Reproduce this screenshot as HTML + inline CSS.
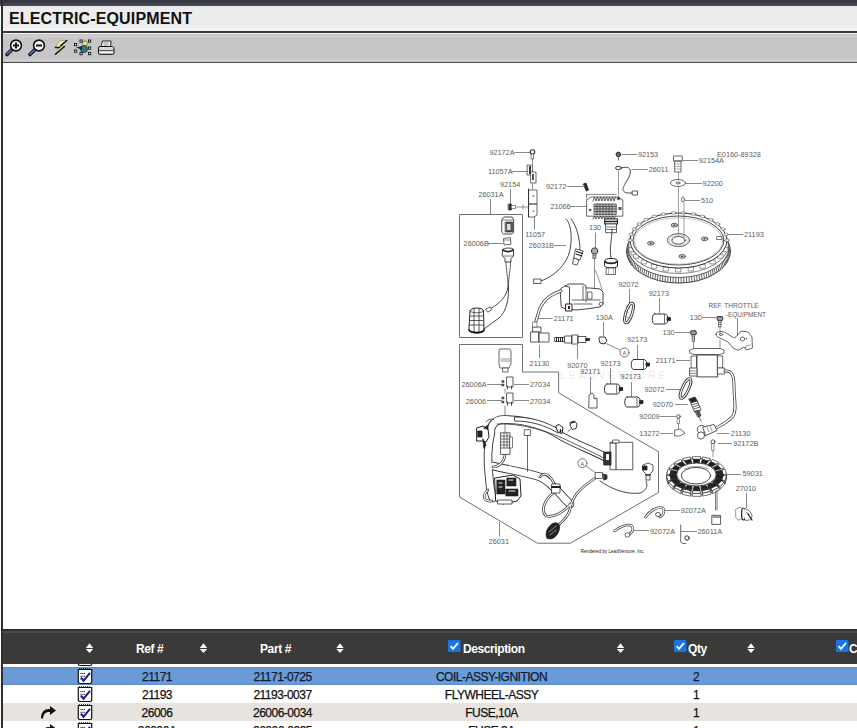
<!DOCTYPE html>
<html><head><meta charset="utf-8">
<style>
html,body{margin:0;padding:0;width:857px;height:728px;overflow:hidden;background:#fff;font-family:"Liberation Sans",sans-serif;}
.a{position:absolute;}
#topbar{left:0;top:0;width:857px;height:6px;background:linear-gradient(#30333d,#4a4d58);}
#lborder{left:1px;top:0;width:2px;height:728px;background:#2e2e2e;}
#hdr{left:3px;top:6px;width:854px;height:25px;background:#ececec;}
#hline{left:3px;top:31px;width:854px;height:2px;background:#3a3a3a;}
#tb{left:3px;top:33px;width:854px;height:29px;background:#c7c5c7;}
#tline{left:3px;top:62px;width:854px;height:1px;background:#4a4a4a;}
#title{left:9px;top:10px;font-size:16px;font-weight:bold;color:#111;letter-spacing:0.15px;}
#thead{left:3px;top:629px;width:854px;height:35px;background:#3a3a38;}
#theadtop{left:3px;top:629px;width:854px;height:3px;background:#4a4b4d;}
.th{color:#fff;font-weight:bold;font-size:12px;top:642px;letter-spacing:-0.4px;}
.sort{width:9px;height:11px;top:642px;}
.row{left:3px;width:854px;height:18px;}
.td{font-size:12px;color:#111;letter-spacing:-0.5px;-webkit-text-stroke:0.25px currentColor;}
.cb{width:12px;height:12px;background:#1e6ff0;border-radius:1px;top:640px;}
</style></head><body>
<div class="a" id="topbar"></div>
<div class="a" id="hdr"></div>
<div class="a" id="title">ELECTRIC-EQUIPMENT</div>
<div class="a" id="hline"></div>
<div class="a" id="tb"></div>
<div class="a" id="tline"></div>
<div class="a" style="left:3px;top:33px;width:854px;height:1px;background:#f2f2f2"></div>
<div class="a" style="left:3px;top:35px;width:854px;height:3px;background:#cdcbcd"></div>
<div class="a" style="left:3px;top:59px;width:854px;height:2px;background:#cfcecf"></div>
<div class="a" style="left:3px;top:26px;width:854px;height:1px;background:#f3f3f3"></div>
<div class="a" style="left:3px;top:28px;width:854px;height:3px;background:#f5f5f5"></div>
<div class="a" style="left:3px;top:6px;width:854px;height:2px;background:#e8e9ed"></div>
<svg class="a" style="left:0;top:33px" width="130" height="29" viewBox="0 33 130 29">
<g id="zin">
<path d="M7 54.5 L12 49.5" stroke="#0d1a33" stroke-width="3.6" stroke-linecap="round"/>
<path d="M7.3 54 L11.5 49.8" stroke="#5b82b8" stroke-width="1.3" stroke-linecap="round"/>
<circle cx="16" cy="45.5" r="5.4" fill="#f4f4f4" stroke="#111" stroke-width="1.6"/>
</g>
<path d="M13 45.5h6 M16 42.5v6" stroke="#111" stroke-width="2"/>
<use href="#zin" x="23"/>
<path d="M36 45.5h6" stroke="#111" stroke-width="2"/>
<path d="M60 40.5 L66.8 40.5 L60.8 46.5 L64.4 46.5 L55.5 54.3 L59.5 47.5 L55.5 47.5 Z" fill="#f6f2a6" stroke="#8a8a70" stroke-width="0.6" stroke-linejoin="round"/>
<path d="M66.8 40.5 L60.4 45.8 M55.5 47.5 L59.7 47.5 M64.4 46.5 L55.5 54.3" stroke="#111" stroke-width="1.5" stroke-linecap="round"/>
<circle cx="85" cy="43.5" r="2.6" fill="#e8e070" stroke="#555" stroke-width="0.6"/>
<circle cx="84" cy="49" r="3.6" fill="#2c7a78" stroke="#123" stroke-width="0.6"/>
<path d="M76 47.5 L82 46 L82 50 Z" fill="#1a2a55"/>
<g fill="#fff" stroke="#111" stroke-width="0.9">
<rect x="80" y="40" width="2.2" height="2.2"/><rect x="88.5" y="40" width="2.2" height="2.2"/>
<rect x="74.5" y="43.5" width="2.2" height="2.2"/><rect x="88.5" y="47" width="2.2" height="2.2"/>
<rect x="74.5" y="50" width="2.2" height="2.2"/><rect x="80" y="52.5" width="2.2" height="2.2"/><rect x="88.5" y="52.5" width="2.2" height="2.2"/>
</g>
<path d="M101 47 L102.5 41 L111 41 L110.5 47 Z" fill="#fff" stroke="#111" stroke-width="0.9"/>
<path d="M103.5 43h5 M103.3 45h5" stroke="#333" stroke-width="0.6"/>
<path d="M98.5 48 Q98.5 46.5 100 46.5 L112.5 46.5 Q114 47 114 49 L114 53 Q114 54.3 112.5 54.3 L100 54.3 Q98.5 54.3 98.5 53 Z" fill="#d8d8d8" stroke="#111" stroke-width="1"/>
<path d="M99 50.5h14.5" stroke="#333" stroke-width="0.8"/>
<path d="M99.5 52.5h13.5" stroke="#fff" stroke-width="0.8"/>
</svg>


<!--DIAGRAM--><svg class="a" style="left:0;top:0" width="857" height="728" viewBox="0 0 857 728">
<text x="560" y="378.5" font-family="Liberation Sans, sans-serif" font-size="10px" fill="#ececec" textLength="105" lengthAdjust="spacing">LEADVENTURE</text>
<g fill="none" stroke="#6a6a6a" stroke-width="0.8">
<path d="M514.5 152.5L531 152.5"/>
<path d="M511.5 171.5L528 171.5"/>
<path d="M510.5 189L510.5 206"/>
<path d="M490.5 199L490.5 214.5"/>
<path d="M488 243.5L503 243.5"/>
<path d="M534.5 215L534.5 229.5"/>
<path d="M554 245.5L566 245.5"/>
<path d="M622 154.5L637 154.5"/>
<path d="M631.5 169.5L648 169.5"/>
<path d="M566.5 186.5L583 186.5"/>
<path d="M570 206.5L586.5 206.5"/>
<path d="M595.5 232.5L595.5 250"/>
<path d="M535 318.5L552.5 318.5"/>
<path d="M603.5 322L603.5 336"/>
<path d="M629.5 289L629.5 304"/>
<path d="M659.5 298L659.5 313"/>
<path d="M539.5 345L539.5 358"/>
<path d="M577.5 345L577.5 359"/>
<path d="M637.5 345L637.5 359"/>
<path d="M610.5 368L610.5 384"/>
<path d="M590.5 377L590.5 394"/>
<path d="M631.5 382L631.5 397"/>
<path d="M487 384.5L502 384.5"/>
<path d="M514 384.5L529 384.5"/>
<path d="M487 400.5L502 400.5"/>
<path d="M514 400.5L529 400.5"/>
<path d="M499.5 522L499.5 536.5"/>
<path d="M682.5 160.5L698 160.5"/>
<path d="M686 183.5L702 183.5"/>
<path d="M685 200.5L700 200.5"/>
<path d="M727.5 234.5L743 234.5"/>
<path d="M737.5 318L737.5 335"/>
<path d="M702 317.5L716.5 317.5"/>
<path d="M675 332.5L690 332.5"/>
<path d="M676 360.5L690 360.5"/>
<path d="M666 389.5L681 389.5"/>
<path d="M675 404.5L688 404.5"/>
<path d="M660 416.5L676 416.5"/>
<path d="M660 433.5L673 433.5"/>
<path d="M717 433.5L729.5 433.5"/>
<path d="M718 443.5L732 443.5"/>
<path d="M727 474.5L741 474.5"/>
<path d="M746.5 493L746.5 508"/>
<path d="M664 510.5L680 510.5"/>
<path d="M633 530.5L649 530.5"/>
<path d="M681 531.5L697 531.5"/>
</g>
<g fill="none" stroke="#707070" stroke-width="1">
<path d="M459.5 214.5H522.5V337.5H459.5Z"/>
<path d="M459.5 344.5H522.5V372H558.6V392.7L612.6 425L658.5 451.7V492.5L570.4 543.2H537.4L459.5 497V344.5Z"/>
</g>
<g fill="none" stroke="#3a3a3a" stroke-width="0.8" stroke-linejoin="round" stroke-linecap="round">
<!-- ===== flywheel 21193 ===== -->
<ellipse cx="678.5" cy="251.0" rx="52" ry="32" fill="#fff" stroke="#444" stroke-width="1"/>
<path d="M730.50 251.00L729.00 247.50" stroke="#555" stroke-width="0.9"/>
<path d="M730.43 252.67L728.93 249.07" stroke="#555" stroke-width="0.9"/>
<path d="M730.22 254.34L728.72 250.64" stroke="#555" stroke-width="0.9"/>
<path d="M729.86 256.01L728.38 252.19" stroke="#555" stroke-width="0.9"/>
<path d="M729.36 257.65L727.90 253.74" stroke="#555" stroke-width="0.9"/>
<path d="M728.73 259.28L727.28 255.26" stroke="#555" stroke-width="0.9"/>
<path d="M727.95 260.89L726.53 256.77" stroke="#555" stroke-width="0.9"/>
<path d="M727.05 262.47L725.65 258.25" stroke="#555" stroke-width="0.9"/>
<path d="M726.00 264.02L724.63 259.70" stroke="#555" stroke-width="0.9"/>
<path d="M724.83 265.53L723.50 261.12" stroke="#555" stroke-width="0.9"/>
<path d="M723.53 267.00L722.23 262.50" stroke="#555" stroke-width="0.9"/>
<path d="M722.11 268.43L720.85 263.84" stroke="#555" stroke-width="0.9"/>
<path d="M720.57 269.81L719.36 265.13" stroke="#555" stroke-width="0.9"/>
<path d="M718.91 271.14L717.75 266.38" stroke="#555" stroke-width="0.9"/>
<path d="M717.14 272.41L716.03 267.57" stroke="#555" stroke-width="0.9"/>
<path d="M715.27 273.63L714.21 268.71" stroke="#555" stroke-width="0.9"/>
<path d="M713.29 274.78L712.29 269.79" stroke="#555" stroke-width="0.9"/>
<path d="M711.22 275.87L710.28 270.81" stroke="#555" stroke-width="0.9"/>
<path d="M709.06 276.89L708.18 271.77" stroke="#555" stroke-width="0.9"/>
<path d="M706.82 277.84L706.00 272.66" stroke="#555" stroke-width="0.9"/>
<path d="M704.50 278.71L703.75 273.48" stroke="#555" stroke-width="0.9"/>
<path d="M702.11 279.51L701.43 274.23" stroke="#555" stroke-width="0.9"/>
<path d="M699.65 280.23L699.04 274.91" stroke="#555" stroke-width="0.9"/>
<path d="M697.14 280.87L696.60 275.51" stroke="#555" stroke-width="0.9"/>
<path d="M694.57 281.43L694.11 276.03" stroke="#555" stroke-width="0.9"/>
<path d="M691.96 281.91L691.57 276.48" stroke="#555" stroke-width="0.9"/>
<path d="M689.31 282.30L689.00 276.84" stroke="#555" stroke-width="0.9"/>
<path d="M686.63 282.61L686.40 277.13" stroke="#555" stroke-width="0.9"/>
<path d="M683.94 282.82L683.78 277.34" stroke="#555" stroke-width="0.9"/>
<path d="M681.22 282.96L681.14 277.46" stroke="#555" stroke-width="0.9"/>
<path d="M678.50 283.00L678.50 277.50" stroke="#555" stroke-width="0.9"/>
<path d="M675.78 282.96L675.86 277.46" stroke="#555" stroke-width="0.9"/>
<path d="M673.06 282.82L673.22 277.34" stroke="#555" stroke-width="0.9"/>
<path d="M670.37 282.61L670.60 277.13" stroke="#555" stroke-width="0.9"/>
<path d="M667.69 282.30L668.00 276.84" stroke="#555" stroke-width="0.9"/>
<path d="M665.04 281.91L665.43 276.48" stroke="#555" stroke-width="0.9"/>
<path d="M662.43 281.43L662.89 276.03" stroke="#555" stroke-width="0.9"/>
<path d="M659.86 280.87L660.40 275.51" stroke="#555" stroke-width="0.9"/>
<path d="M657.35 280.23L657.96 274.91" stroke="#555" stroke-width="0.9"/>
<path d="M654.89 279.51L655.57 274.23" stroke="#555" stroke-width="0.9"/>
<path d="M652.50 278.71L653.25 273.48" stroke="#555" stroke-width="0.9"/>
<path d="M650.18 277.84L651.00 272.66" stroke="#555" stroke-width="0.9"/>
<path d="M647.94 276.89L648.82 271.77" stroke="#555" stroke-width="0.9"/>
<path d="M645.78 275.87L646.72 270.81" stroke="#555" stroke-width="0.9"/>
<path d="M643.71 274.78L644.71 269.79" stroke="#555" stroke-width="0.9"/>
<path d="M641.73 273.63L642.79 268.71" stroke="#555" stroke-width="0.9"/>
<path d="M639.86 272.41L640.97 267.57" stroke="#555" stroke-width="0.9"/>
<path d="M638.09 271.14L639.25 266.38" stroke="#555" stroke-width="0.9"/>
<path d="M636.43 269.81L637.64 265.13" stroke="#555" stroke-width="0.9"/>
<path d="M634.89 268.43L636.15 263.84" stroke="#555" stroke-width="0.9"/>
<path d="M633.47 267.00L634.77 262.50" stroke="#555" stroke-width="0.9"/>
<path d="M632.17 265.53L633.50 261.12" stroke="#555" stroke-width="0.9"/>
<path d="M631.00 264.02L632.37 259.70" stroke="#555" stroke-width="0.9"/>
<path d="M629.95 262.47L631.35 258.25" stroke="#555" stroke-width="0.9"/>
<path d="M629.05 260.89L630.47 256.77" stroke="#555" stroke-width="0.9"/>
<path d="M628.27 259.28L629.72 255.26" stroke="#555" stroke-width="0.9"/>
<path d="M627.64 257.65L629.10 253.74" stroke="#555" stroke-width="0.9"/>
<path d="M627.14 256.01L628.62 252.19" stroke="#555" stroke-width="0.9"/>
<path d="M626.78 254.34L628.28 250.64" stroke="#555" stroke-width="0.9"/>
<path d="M626.57 252.67L628.07 249.07" stroke="#555" stroke-width="0.9"/>
<path d="M626.50 251.00L628.00 247.50" stroke="#555" stroke-width="0.9"/>
<ellipse cx="678.5" cy="247.5" rx="50.5" ry="30" fill="none" stroke="#444" stroke-width="0.8"/>
<ellipse cx="678.5" cy="244.5" rx="50" ry="29" fill="none" stroke="#555" stroke-width="0.7"/>
<path d="M722.85 247.62h5v4h-5z" fill="#fff" stroke="#555" stroke-width="0.6"/>
<path d="M718.00 254.25h5v4h-5z" fill="#fff" stroke="#555" stroke-width="0.6"/>
<path d="M710.29 259.95h5v4h-5z" fill="#fff" stroke="#555" stroke-width="0.6"/>
<path d="M700.25 264.32h5v4h-5z" fill="#fff" stroke="#555" stroke-width="0.6"/>
<path d="M688.55 267.06h5v4h-5z" fill="#fff" stroke="#555" stroke-width="0.6"/>
<path d="M676.00 268.00h5v4h-5z" fill="#fff" stroke="#555" stroke-width="0.6"/>
<path d="M663.45 267.06h5v4h-5z" fill="#fff" stroke="#555" stroke-width="0.6"/>
<path d="M651.75 264.32h5v4h-5z" fill="#fff" stroke="#555" stroke-width="0.6"/>
<path d="M641.71 259.95h5v4h-5z" fill="#fff" stroke="#555" stroke-width="0.6"/>
<path d="M634.00 254.25h5v4h-5z" fill="#fff" stroke="#555" stroke-width="0.6"/>
<path d="M629.15 247.62h5v4h-5z" fill="#fff" stroke="#555" stroke-width="0.6"/>
<ellipse cx="678.5" cy="240.5" rx="48.5" ry="27.5" fill="#fff" stroke="#333" stroke-width="1"/>
<ellipse cx="630.00" cy="240.20" rx="2.2" ry="1.3" fill="#fff" stroke="#555" stroke-width="0.6"/>
<ellipse cx="631.06" cy="234.48" rx="2.2" ry="1.3" fill="#fff" stroke="#555" stroke-width="0.6"/>
<ellipse cx="634.19" cy="229.01" rx="2.2" ry="1.3" fill="#fff" stroke="#555" stroke-width="0.6"/>
<ellipse cx="639.26" cy="224.04" rx="2.2" ry="1.3" fill="#fff" stroke="#555" stroke-width="0.6"/>
<ellipse cx="646.05" cy="219.76" rx="2.2" ry="1.3" fill="#fff" stroke="#555" stroke-width="0.6"/>
<ellipse cx="654.25" cy="216.38" rx="2.2" ry="1.3" fill="#fff" stroke="#555" stroke-width="0.6"/>
<ellipse cx="663.51" cy="214.05" rx="2.2" ry="1.3" fill="#fff" stroke="#555" stroke-width="0.6"/>
<ellipse cx="673.43" cy="212.85" rx="2.2" ry="1.3" fill="#fff" stroke="#555" stroke-width="0.6"/>
<ellipse cx="683.57" cy="212.85" rx="2.2" ry="1.3" fill="#fff" stroke="#555" stroke-width="0.6"/>
<ellipse cx="693.49" cy="214.05" rx="2.2" ry="1.3" fill="#fff" stroke="#555" stroke-width="0.6"/>
<ellipse cx="702.75" cy="216.38" rx="2.2" ry="1.3" fill="#fff" stroke="#555" stroke-width="0.6"/>
<ellipse cx="710.95" cy="219.76" rx="2.2" ry="1.3" fill="#fff" stroke="#555" stroke-width="0.6"/>
<ellipse cx="717.74" cy="224.04" rx="2.2" ry="1.3" fill="#fff" stroke="#555" stroke-width="0.6"/>
<ellipse cx="722.81" cy="229.01" rx="2.2" ry="1.3" fill="#fff" stroke="#555" stroke-width="0.6"/>
<ellipse cx="725.94" cy="234.48" rx="2.2" ry="1.3" fill="#fff" stroke="#555" stroke-width="0.6"/>
<ellipse cx="727.00" cy="240.20" rx="2.2" ry="1.3" fill="#fff" stroke="#555" stroke-width="0.6"/>
<ellipse cx="678.5" cy="240.5" rx="45.5" ry="24.5" fill="none" stroke="#333" stroke-width="0.9"/>
<ellipse cx="678.5" cy="241.0" rx="44" ry="23.2" fill="none" stroke="#888" stroke-width="0.5"/>
<ellipse cx="678.5" cy="240.1" rx="11.2" ry="6.5" fill="#e4e4e4" stroke="#444"/>
<ellipse cx="678.5" cy="240.3" rx="6.5" ry="3.8" fill="#fff" stroke="#333"/>
<ellipse cx="674.4" cy="225.2" rx="3.3" ry="1.9" fill="#ccc" stroke="#444"/><ellipse cx="674.4" cy="225.2" rx="1.2" ry="0.7" fill="#444" stroke="none"/>
<ellipse cx="704.6" cy="238.8" rx="3.3" ry="1.9" fill="#ccc" stroke="#444"/><ellipse cx="704.6" cy="238.8" rx="1.2" ry="0.7" fill="#444" stroke="none"/>
<ellipse cx="650.8" cy="243.3" rx="3.3" ry="1.9" fill="#ccc" stroke="#444"/><ellipse cx="650.8" cy="243.3" rx="1.2" ry="0.7" fill="#444" stroke="none"/>
<ellipse cx="682.2" cy="256.4" rx="3.3" ry="1.9" fill="#ccc" stroke="#444"/><ellipse cx="682.2" cy="256.4" rx="1.2" ry="0.7" fill="#444" stroke="none"/>
<path d="M717 236.5h5v3h-5z" stroke="#555"/>
<!-- bolt, washer, key -->
<path d="M673.9 156h8.3v5h-8.3z M675 161h6v11h-6z" fill="#fff" stroke="#444"/>
<path d="M675.5 164h5 M675.5 166.5h5 M675.5 169h5" stroke="#777" stroke-width="0.6"/>
<ellipse cx="678" cy="183" rx="7.5" ry="3.5" fill="#fff" stroke="#444"/>
<ellipse cx="678" cy="183" rx="2" ry="1" stroke="#444"/>
<ellipse cx="683" cy="199.5" rx="1.5" ry="2.6" stroke="#444"/>
<path d="M678.5 172v8 M678.5 187v48 M684 203v35" stroke="#777" stroke-width="0.7"/>

<!-- ===== stator 59031 ===== -->
<ellipse cx="696.5" cy="476.5" rx="30" ry="18.5" fill="#fff" stroke="#333" stroke-width="0.8"/>
<path d="M693.92 463.63 L692.90 458.49 L700.10 458.49 L699.08 463.63Z" fill="#1e1e1e" stroke="#1e1e1e" stroke-width="0.6"/>
<path d="M692.74 458.88 L692.32 456.68 L700.68 456.68 L700.26 458.88Z" fill="#fff" stroke="#333" stroke-width="0.7"/>
<path d="M687.36 464.83 L683.76 460.23 L690.53 458.74 L692.21 463.80Z" fill="#1e1e1e" stroke="#1e1e1e" stroke-width="0.6"/>
<path d="M683.82 460.63 L682.42 458.67 L690.26 456.90 L690.89 459.08Z" fill="#fff" stroke="#333" stroke-width="0.7"/>
<path d="M700.79 463.80 L702.47 458.74 L709.24 460.23 L705.64 464.83Z" fill="#1e1e1e" stroke="#1e1e1e" stroke-width="0.6"/>
<path d="M702.11 459.08 L702.74 456.90 L710.58 458.67 L709.18 460.63Z" fill="#fff" stroke="#333" stroke-width="0.7"/>
<path d="M707.14 465.33 L711.33 460.96 L716.85 463.75 L711.10 467.25Z" fill="#1e1e1e" stroke="#1e1e1e" stroke-width="0.6"/>
<path d="M710.81 461.19 L712.40 459.31 L718.79 462.62 L716.56 464.11Z" fill="#fff" stroke="#333" stroke-width="0.7"/>
<path d="M681.90 467.25 L676.15 463.75 L681.67 460.96 L685.86 465.33Z" fill="#1e1e1e" stroke="#1e1e1e" stroke-width="0.6"/>
<path d="M676.44 464.11 L674.21 462.62 L680.60 459.31 L682.19 461.19Z" fill="#fff" stroke="#333" stroke-width="0.7"/>
<path d="M712.21 468.02 L718.40 464.86 L722.00 468.63 L714.79 470.61Z" fill="#1e1e1e" stroke="#1e1e1e" stroke-width="0.6"/>
<path d="M717.78 464.98 L720.14 463.61 L724.32 468.07 L721.53 468.90Z" fill="#fff" stroke="#333" stroke-width="0.7"/>
<path d="M678.21 470.61 L671.00 468.63 L674.60 464.86 L680.79 468.02Z" fill="#1e1e1e" stroke="#1e1e1e" stroke-width="0.6"/>
<path d="M671.47 468.90 L668.68 468.07 L672.86 463.61 L675.22 464.98Z" fill="#fff" stroke="#333" stroke-width="0.7"/>
<path d="M676.72 474.50 L668.93 474.27 L670.18 469.99 L677.62 471.55Z" fill="#1e1e1e" stroke="#1e1e1e" stroke-width="0.6"/>
<path d="M676.72 476.50 L668.93 476.27 L670.18 471.99 L677.62 473.55Z" fill="#2a2a2a" stroke="#222" stroke-width="0.5"/>
<path d="M669.52 474.43 L666.52 474.35 L667.97 469.28 L670.82 469.97Z" fill="#fff" stroke="#333" stroke-width="0.7"/>
<path d="M715.38 471.55 L722.82 469.99 L724.07 474.27 L716.28 474.50Z" fill="#1e1e1e" stroke="#1e1e1e" stroke-width="0.6"/>
<path d="M715.38 473.55 L722.82 471.99 L724.07 476.27 L716.28 476.50Z" fill="#2a2a2a" stroke="#222" stroke-width="0.5"/>
<path d="M722.18 469.97 L725.03 469.28 L726.48 474.35 L723.48 474.43Z" fill="#fff" stroke="#333" stroke-width="0.7"/>
<path d="M677.62 478.45 L670.18 480.01 L668.93 475.73 L676.72 475.50Z" fill="#1e1e1e" stroke="#1e1e1e" stroke-width="0.6"/>
<path d="M677.62 480.45 L670.18 482.01 L668.93 477.73 L676.72 477.50Z" fill="#2a2a2a" stroke="#222" stroke-width="0.5"/>
<path d="M667.97 480.72 L666.52 475.65 L666.52 478.65 L667.97 483.72Z" fill="#fff" stroke="#333" stroke-width="0.7"/>
<path d="M670.82 480.03 L667.97 480.72 L666.52 475.65 L669.52 475.57Z" fill="#fff" stroke="#333" stroke-width="0.7"/>
<path d="M716.28 475.50 L724.07 475.73 L722.82 480.01 L715.38 478.45Z" fill="#1e1e1e" stroke="#1e1e1e" stroke-width="0.6"/>
<path d="M716.28 477.50 L724.07 477.73 L722.82 482.01 L715.38 480.45Z" fill="#2a2a2a" stroke="#222" stroke-width="0.5"/>
<path d="M726.48 475.65 L725.03 480.72 L725.03 483.72 L726.48 478.65Z" fill="#fff" stroke="#333" stroke-width="0.7"/>
<path d="M723.48 475.57 L726.48 475.65 L725.03 480.72 L722.18 480.03Z" fill="#fff" stroke="#333" stroke-width="0.7"/>
<path d="M714.79 479.39 L722.00 481.37 L718.40 485.14 L712.21 481.98Z" fill="#1e1e1e" stroke="#1e1e1e" stroke-width="0.6"/>
<path d="M714.79 481.39 L722.00 483.37 L718.40 487.14 L712.21 483.98Z" fill="#2a2a2a" stroke="#222" stroke-width="0.5"/>
<path d="M724.32 481.93 L720.14 486.39 L720.14 489.39 L724.32 484.93Z" fill="#fff" stroke="#333" stroke-width="0.7"/>
<path d="M721.53 481.10 L724.32 481.93 L720.14 486.39 L717.78 485.02Z" fill="#fff" stroke="#333" stroke-width="0.7"/>
<path d="M680.79 481.98 L674.60 485.14 L671.00 481.37 L678.21 479.39Z" fill="#1e1e1e" stroke="#1e1e1e" stroke-width="0.6"/>
<path d="M680.79 483.98 L674.60 487.14 L671.00 483.37 L678.21 481.39Z" fill="#2a2a2a" stroke="#222" stroke-width="0.5"/>
<path d="M672.86 486.39 L668.68 481.93 L668.68 484.93 L672.86 489.39Z" fill="#fff" stroke="#333" stroke-width="0.7"/>
<path d="M675.22 485.02 L672.86 486.39 L668.68 481.93 L671.47 481.10Z" fill="#fff" stroke="#333" stroke-width="0.7"/>
<path d="M711.10 482.75 L716.85 486.25 L711.33 489.04 L707.14 484.67Z" fill="#1e1e1e" stroke="#1e1e1e" stroke-width="0.6"/>
<path d="M711.10 484.75 L716.85 488.25 L711.33 491.04 L707.14 486.67Z" fill="#2a2a2a" stroke="#222" stroke-width="0.5"/>
<path d="M718.79 487.38 L712.40 490.69 L712.40 493.69 L718.79 490.38Z" fill="#fff" stroke="#333" stroke-width="0.7"/>
<path d="M716.56 485.89 L718.79 487.38 L712.40 490.69 L710.81 488.81Z" fill="#fff" stroke="#333" stroke-width="0.7"/>
<path d="M685.86 484.67 L681.67 489.04 L676.15 486.25 L681.90 482.75Z" fill="#1e1e1e" stroke="#1e1e1e" stroke-width="0.6"/>
<path d="M685.86 486.67 L681.67 491.04 L676.15 488.25 L681.90 484.75Z" fill="#2a2a2a" stroke="#222" stroke-width="0.5"/>
<path d="M680.60 490.69 L674.21 487.38 L674.21 490.38 L680.60 493.69Z" fill="#fff" stroke="#333" stroke-width="0.7"/>
<path d="M682.19 488.81 L680.60 490.69 L674.21 487.38 L676.44 485.89Z" fill="#fff" stroke="#333" stroke-width="0.7"/>
<path d="M705.64 485.17 L709.24 489.77 L702.47 491.26 L700.79 486.20Z" fill="#1e1e1e" stroke="#1e1e1e" stroke-width="0.6"/>
<path d="M705.64 487.17 L709.24 491.77 L702.47 493.26 L700.79 488.20Z" fill="#2a2a2a" stroke="#222" stroke-width="0.5"/>
<path d="M710.58 491.33 L702.74 493.10 L702.74 496.10 L710.58 494.33Z" fill="#fff" stroke="#333" stroke-width="0.7"/>
<path d="M709.18 489.37 L710.58 491.33 L702.74 493.10 L702.11 490.92Z" fill="#fff" stroke="#333" stroke-width="0.7"/>
<path d="M692.21 486.20 L690.53 491.26 L683.76 489.77 L687.36 485.17Z" fill="#1e1e1e" stroke="#1e1e1e" stroke-width="0.6"/>
<path d="M692.21 488.20 L690.53 493.26 L683.76 491.77 L687.36 487.17Z" fill="#2a2a2a" stroke="#222" stroke-width="0.5"/>
<path d="M690.26 493.10 L682.42 491.33 L682.42 494.33 L690.26 496.10Z" fill="#fff" stroke="#333" stroke-width="0.7"/>
<path d="M690.89 490.92 L690.26 493.10 L682.42 491.33 L683.82 489.37Z" fill="#fff" stroke="#333" stroke-width="0.7"/>
<path d="M699.08 486.37 L700.10 491.51 L692.90 491.51 L693.92 486.37Z" fill="#1e1e1e" stroke="#1e1e1e" stroke-width="0.6"/>
<path d="M699.08 488.37 L700.10 493.51 L692.90 493.51 L693.92 488.37Z" fill="#2a2a2a" stroke="#222" stroke-width="0.5"/>
<path d="M700.68 493.32 L692.32 493.32 L692.32 496.32 L700.68 496.32Z" fill="#fff" stroke="#333" stroke-width="0.7"/>
<path d="M700.26 491.12 L700.68 493.32 L692.32 493.32 L692.74 491.12Z" fill="#fff" stroke="#333" stroke-width="0.7"/>
<ellipse cx="696.5" cy="474.5" rx="19.8" ry="11.47" fill="#fff" stroke="#333" stroke-width="0.8"/>
<ellipse cx="696.0" cy="475.7" rx="14.7" ry="8.3" fill="#fff" stroke="#333" stroke-width="0.9"/>
<path d="M684.5 469.0 C691.5 465.5 701.5 465.5 708.5 469.0" fill="none" stroke="#666" stroke-width="0.6"/>
<path d="M717 490v20 M715.5 492v18" stroke="#444" stroke-width="0.7"/>
<path d="M712.2 515.3h8.4v9.1h-8.4z" fill="#fff" stroke="#333"/>
<path d="M713 517h7" stroke="#333" stroke-width="1.2"/>
<!-- sensor 27010 -->
<path d="M736 509 l4 -1.8 2.2 1.8 v9.5 l-4 1.8 -2.2 -2.6z" fill="#fff" stroke="#666" stroke-width="0.7"/>
<ellipse cx="743.6" cy="514" rx="2" ry="6" fill="#fff" stroke="#222" stroke-width="1.2"/>
<path d="M744.5 508.5 C748 509 751 512 752 515.5 C752 519 749 521.5 745 520" fill="#fff" stroke="#444" stroke-width="0.8"/>
<path d="M748 514 l4 6" stroke="#222" stroke-width="1.3"/>
<path d="M746 512 l3 2" stroke="#444" stroke-width="0.7"/>
<!-- hoses 92072A -->
<path d="M645.5 517 C650 511 657 506 663 508 C665 512 663 516 660 517" stroke="#444" stroke-width="2.6"/>
<path d="M645.5 517 C650 511 657 506 663 508 C665 512 663 516 660 517" stroke="#fff" stroke-width="1.2"/>
<ellipse cx="658" cy="514.5" rx="2.5" ry="2.2" fill="#fff" stroke="#444"/>
<path d="M614.5 531 C620 527 627 523 632 526 C634 530 632 533 629 534" stroke="#444" stroke-width="2.6"/>
<path d="M614.5 531 C620 527 627 523 632 526 C634 530 632 533 629 534" stroke="#fff" stroke-width="1.2"/>
<ellipse cx="627.5" cy="535" rx="2.5" ry="2.2" fill="#fff" stroke="#444"/>
<!-- ground wire 26011A -->
<path d="M680.7 525v17l2 1.5h3" stroke="#444"/>
<circle cx="687" cy="538" r="2.2" fill="#fff" stroke="#333" stroke-width="1"/>

<!-- ===== right coil / throttle ===== -->
<path d="M716 334 C716 331 722 330.5 726 333 L734 338 L738 335 L741 331 L748 332 L752 337 L752.4 348 L747 350 L744 347 L738 350.4 L733 348 L728 342 L720 338 C717 337 716 336 716 334 Z" fill="#fff" stroke="#444" stroke-width="0.8"/>
<ellipse cx="721" cy="334.5" rx="1.8" ry="1.1" stroke="#444" stroke-width="0.7"/>
<ellipse cx="742.5" cy="339" rx="2.2" ry="2" stroke="#444" stroke-width="0.8"/>
<circle cx="746.5" cy="338.5" r="0.7" fill="#444" stroke="none"/>
<path d="M745 350 l1 -4 4 -1" stroke="#555" stroke-width="0.6"/>
<path d="M717.8 316.5 h4.4 l0.8 2 -0.8 2 h-4.4 l-0.8 -2z" fill="#999" stroke="#222" stroke-width="0.9"/>
<path d="M719 320.5h2v6.5h-2z" fill="#fff" stroke="#333" stroke-width="0.7"/>
<path d="M719 322.5h2 M719 324.5h2" stroke="#333" stroke-width="0.6"/>
<path d="M691.3 330.8 h4.4 l0.8 2 -0.8 2 h-4.4 l-0.8 -2z" fill="#999" stroke="#222" stroke-width="0.9"/>
<path d="M692.5 334.8h2v6.5h-2z" fill="#fff" stroke="#333" stroke-width="0.7"/>
<path d="M692.5 336.8h2 M692.5 338.8h2" stroke="#333" stroke-width="0.6"/>
<path d="M693.5 341v8 M720 327v8 M720 340v9" stroke="#666" stroke-width="0.7"/>
<path d="M690 350 l4 -1.5 h26 l4 1.5 v3 l-4 1.5 h-26 l-4 -1.5z" fill="#fff" stroke="#444"/>
<path d="M691.5 356h5v13h-5z" fill="#fff" stroke="#444"/>
<path d="M697.3 355h20.4v21.9h-20.4z" fill="#fff" stroke="#333" stroke-width="0.9"/>
<path d="M690 368h7v8h-7z" fill="#fff" stroke="#333"/>
<path d="M690 371h7 M690 373.5h7" stroke="#555" stroke-width="0.7"/>
<path d="M717.7 356h5v12h-5z" fill="#fff" stroke="#444"/>
<path d="M717.7 368h7v6h-7z" fill="#fff" stroke="#444"/>
<!-- HT lead right -->
<path d="M725 371 C733 370 734 378 734 386 C734 400 737 410 733 416 C729 421 722 425 716 428" stroke="#444" stroke-width="3"/>
<path d="M725 371 C733 370 734 378 734 386 C734 400 737 410 733 416 C729 421 722 425 716 428" stroke="#fff" stroke-width="1.4"/>
<!-- O-ring right -->
<ellipse cx="685.5" cy="388.5" rx="3.2" ry="10.8" transform="rotate(25 685.5 388.5)" stroke="#333" stroke-width="2.8"/>
<ellipse cx="685.5" cy="388.5" rx="3.2" ry="10.8" transform="rotate(25 685.5 388.5)" stroke="#fff" stroke-width="1.1"/>
<!-- spark plug right -->
<path d="M689 399 l6 -2 3 5 -6 2z" fill="#222"/>
<path d="M691 403 l6 -2 4 9 -6 2z" fill="#fff" stroke="#333"/>
<path d="M692 405l6 -2 M693 407l6 -2 M694 409l6 -2" stroke="#444" stroke-width="0.8"/>
<path d="M695 411l4 -1 2 6 -3 1z" fill="#555" stroke="#333" stroke-width="0.6"/>
<path d="M699 417l2 4" stroke="#444"/>
<!-- bolt 92009 / bracket 13272 -->
<circle cx="678.5" cy="416.5" r="1.8" fill="#fff" stroke="#333"/>
<path d="M677.5 418.5h2v5h-2z" fill="#fff" stroke="#444" stroke-width="0.6"/>
<path d="M678.5 424v5" stroke="#666" stroke-width="0.7"/>
<path d="M675 430l5 -1 5 4 -5 3 -5 0z" fill="#fff" stroke="#444"/>
<!-- plug cap right -->
<circle cx="701.5" cy="429.5" r="4.2" fill="#fff" stroke="#333"/>
<circle cx="701" cy="435.5" r="3.6" fill="#fff" stroke="#333"/>
<path d="M703 427 l11 -2.5 3 6 -11 5z" fill="#fff" stroke="#333"/>
<path d="M707 427l2 5 M710 426l2 5" stroke="#555" stroke-width="0.6"/>
<!-- screw 92172B -->
<circle cx="712.9" cy="441.8" r="2" fill="#fff" stroke="#333"/>
<path d="M712 443.5h2v7h-2z" fill="#fff" stroke="#444" stroke-width="0.6"/>
<path d="M713 451v6" stroke="#666" stroke-width="0.7"/>

<!-- ===== regulator 21066 & top middle ===== -->
<circle cx="618.4" cy="154.4" r="2.3" fill="#666" stroke="#333" stroke-width="1"/>
<path d="M618.5 157v3" stroke="#444"/>
<path d="M618.5 171v27" stroke="#666" stroke-width="0.7" stroke-dasharray="3 1"/>
<ellipse cx="618.5" cy="168" rx="3" ry="1.6" fill="#fff" stroke="#333" stroke-width="1"/>
<path d="M621 168 C630 165 633 170 628 179 C623 187 620 192 628 193 L633 193" stroke="#333" stroke-width="0.9"/>
<path d="M632.5 191h5v4h-5z" fill="#fff" stroke="#333"/>
<path d="M583.5 184 l2.5 -1 2.5 7 -2 1z" fill="#222" stroke="#222" stroke-width="0.8"/>
<path d="M586.6 194.4 h29.6 M586.6 194.4 v5" stroke="#555" stroke-width="0.7"/>
<path d="M587 200 l4 -3 h26 l5.8 3 v16.2 h-35.8z" fill="#fff" stroke="#444" stroke-width="0.8"/>
<path d="M593 201 l1.5 -4 1.5 4 1.5 -4 1.5 4 1.5 -4 1.5 4 1.5 -4 1.5 4 1.5 -4 1.5 4 1.5 -4 1.5 4 1.5 -4 1.5 4 1.5 -4" stroke="#333" stroke-width="0.8"/>
<path d="M594.4 204h21.8v10.6h-21.8z" fill="#bbb" stroke="#333" stroke-width="0.7"/>
<path d="M594.4 206.5h21.8 M594.4 209h21.8 M594.4 211.5h21.8 M597 204v10.6 M600 204v10.6 M603 204v10.6 M606 204v10.6 M609 204v10.6 M612 204v10.6" stroke="#333" stroke-width="0.7"/>
<path d="M593 219 l1.5 -3 1.5 3 1.5 -3 1.5 3 1.5 -3 1.5 3 1.5 -3 1.5 3 1.5 -3 1.5 3 1.5 -3 1.5 3 1.5 -3 1.5 3 1.5 -3" stroke="#333" stroke-width="0.8"/>
<circle cx="590" cy="210" r="0.8" fill="#333"/>
<path d="M618.5 207h3v3h-3z" fill="#555" stroke="none"/>
<circle cx="618.5" cy="198.5" r="1.2" fill="#444"/>
<path d="M604.7 219h12.8v5h-12.8z" fill="#fff" stroke="#222" stroke-width="1.1"/>
<path d="M605 221.5h12.5" stroke="#222" stroke-width="1.4"/>
<path d="M606 224h10.5v8.7h-10.5z" fill="#fff" stroke="#333" stroke-width="0.8"/>
<path d="M606.5 227h9.5 M606.5 229.5h9.5" stroke="#444" stroke-width="0.7"/>
<path d="M612 229 C612 240 609 248 611 258" stroke="#333" stroke-width="0.9"/>
<path d="M604.5 261 C604.5 257.5 617.5 257.5 617.5 261 V266 C617.5 268.5 604.5 268.5 604.5 266Z" fill="#fff" stroke="#222" stroke-width="1"/>
<path d="M605 261.5 C607 264 615 264 617 261.5" stroke="#222" stroke-width="1.6"/>
<path d="M606.5 268h9v6.5h-9z" fill="#fff" stroke="#444" stroke-width="0.8"/>
<path d="M608.5 268.5v6 M613.5 268.5v6" stroke="#666" stroke-width="0.5"/>
<!-- screw 130 + coil left -->
<path d="M591.8 249.5 l1.4 -1.5 h3 l1.4 1.5 v3 l-1.4 1.5 h-3 l-1.4 -1.5z" fill="#aaa" stroke="#222" stroke-width="0.9"/>
<path d="M593.3 254h2.5v4.5h-2.5z" fill="#fff" stroke="#333" stroke-width="0.7"/>
<path d="M593.3 255.5h2.5 M593.3 257h2.5" stroke="#333" stroke-width="0.5"/>
<path d="M594.5 258v31 M595 270 C598 276 600 282 602 290" stroke="#666" stroke-width="0.7"/>
<path d="M565 286 l4 -2 h14 l3 2 v2 h4 l10 1 3 3 v12 l-3 3 -14 2 -10 1 -8 -1 -4 -3z" fill="#fff" stroke="#333" stroke-width="0.9"/>
<path d="M560.5 289 l4 -3 5 1 v20 l-4 2 -4 -2z" fill="#fff" stroke="#333" stroke-width="0.9"/>
<path d="M566 304h6v7h-6z" fill="#fff" stroke="#222" stroke-width="1"/>
<path d="M568 306h2v3h-2z" fill="#222" stroke="none"/>
<path d="M583 286v14 M586 288v14 M572 300 h28 M574 304 h18" stroke="#444" stroke-width="0.8"/>
<path d="M588 292h4v7h-4z" fill="#fff" stroke="#444"/>
<circle cx="601" cy="304" r="1.8" fill="#fff" stroke="#444"/>
<path d="M561 291 C548 295 542 302 539 311 L536 321" stroke="#444" stroke-width="3"/>
<path d="M561 291 C548 295 542 302 539 311 L536 321" stroke="#fff" stroke-width="1.4"/>
<!-- sensor with wire -->
<path d="M571 219 C577 226 580 240 580 250" stroke="#333" stroke-width="0.9"/>
<path d="M576 249 l7 2 -3 9 -6 -2z" fill="#fff" stroke="#333"/>
<path d="M576.5 251.5 l6 2 M576 254 l6 2" stroke="#222" stroke-width="1.2"/>
<path d="M574 258l5 2 -2 5 -4 -1z" fill="#fff" stroke="#333"/>
<!-- wire 26031B -->
<path d="M566 219 C570 222 573 234 570 250 C567 265 553 277 541 281" stroke="#333" stroke-width="0.9"/>
<path d="M534 279h7v4.5h-7z" fill="#fff" stroke="#333"/>
<!-- O-ring 92072 left -->
<ellipse cx="629" cy="313" rx="3.2" ry="10.3" transform="rotate(18 629 313)" stroke="#333" stroke-width="2.8"/>
<ellipse cx="629" cy="313" rx="3.2" ry="10.3" transform="rotate(18 629 313)" stroke="#fff" stroke-width="1.1"/>
<path d="M626 306 l4 2 M625 311 l4 2 M624.5 316 l4 2" stroke="#555" stroke-width="0.5"/>
<!-- caps 92173 -->
<defs><g id="cap"><path d="M2 0 h11 l2 2 v6 l-2 2 h-11 C-1 10 -1 0 2 0z" fill="#fff" stroke="#333" stroke-width="1"/><path d="M12 1 v8" stroke="#444"/><path d="M15 3.5h3v3h-3z" fill="#222" stroke="#222"/></g></defs>
<use href="#cap" x="652.5" y="314"/>
<use href="#cap" x="631.5" y="359.5"/>
<use href="#cap" x="604.7" y="384"/>
<use href="#cap" x="625" y="397"/>
<!-- clip 92171 -->
<path d="M589 400 v-5 l3 -2 2 2 v4 l3 -1 v10 h-8z" fill="#fff" stroke="#333"/>
<!-- plug cap left 21130 -->
<path d="M533 327h8v5h-8z" fill="#fff" stroke="#333"/>
<path d="M531 332h8v10h-8z M539 333h10v9h-10z" fill="#fff" stroke="#333"/>
<path d="M533 322h4v5h-4z" fill="#fff" stroke="#444" stroke-width="0.6"/>
<!-- spark plug left 92070 -->
<path d="M555 337.5h10v4h-10z" fill="#fff" stroke="#333"/>
<path d="M556.5 337.5v4 M558.5 337.5v4 M560.5 337.5v4 M562.5 337.5v4" stroke="#222" stroke-width="1"/>
<path d="M565 336h7v7h-7z M572 335h6v9h-6z M578 336.5h8v6h-8z" fill="#fff" stroke="#333"/>
<path d="M586 338.5h3.5v2h-3.5z" fill="#222" stroke="#222"/>
<!-- screw 130A, circle A -->
<path d="M600 337 l5 0 2 4 -3 3 -4 -1 -1 -4z" fill="#fff" stroke="#333" stroke-width="1"/>
<path d="M605 343 L620 350" stroke="#555" stroke-width="0.7"/>
<circle cx="624.5" cy="352.5" r="4.5" fill="#fff" stroke="#555" stroke-width="0.8"/>
<text x="622.5" y="355" font-family="Liberation Sans, sans-serif" font-size="5.5px" fill="#555" stroke="none">A</text>
</g>

<g fill="none" stroke="#3a3a3a" stroke-width="0.8" stroke-linejoin="round" stroke-linecap="round">
<!-- top-left brackets -->
<circle cx="532.5" cy="152" r="2.2" fill="#fff" stroke="#333" stroke-width="1.1"/>
<path d="M531.5 154h2v5h-2z" fill="#fff" stroke="#444" stroke-width="0.7"/>
<path d="M532.5 159v5" stroke="#666" stroke-width="0.7"/>
<path d="M527.5 165h5v10h-5z" fill="#fff" stroke="#444"/>
<path d="M529 166h2v8h-2z" fill="#333" stroke="none"/>
<path d="M531 172h5v11h-5z" fill="#fff" stroke="#444"/>
<path d="M532 174h2v6h-2z" fill="#555" stroke="none"/>
<path d="M532.5 184v5" stroke="#666" stroke-width="0.7"/>
<path d="M529 190h8v14h-8z M529 204l8 0 v11 l-3 2 h-5z" fill="#fff" stroke="#444"/>
<path d="M528.5 189v28" stroke="#333" stroke-width="1"/>
<path d="M533 196h1 M533 211h1" stroke="#333" stroke-width="1.2"/>
<path d="M508.5 204h3v6h-3z" fill="#333" stroke="#333" stroke-width="0.6"/>
<path d="M511.5 205.5h4v3h-4z" fill="#fff" stroke="#444" stroke-width="0.6"/>
<path d="M516 207h13 M523 205v4" stroke="#666" stroke-width="0.7"/>
<!-- box 1 contents -->
<path d="M502 219.5 l2 -2.5 h8 l1.6 2.5 v13 l-2 1.5 h-8 l-1.6 -1.5z" fill="#fff" stroke="#333" stroke-width="0.9"/>
<path d="M502.5 220h11" stroke="#444" stroke-width="0.7"/>
<path d="M505.5 222h7v10h-7z" fill="#555" stroke="#222" stroke-width="0.6"/>
<path d="M507 224h3.5v6h-3.5z" fill="#ddd" stroke="none"/>
<path d="M503.8 238.5 l6.5 -1 0.7 6.8 -6.5 0.6z" fill="#fff" stroke="#444" stroke-width="0.8"/>
<path d="M504 240h6.7" stroke="#444" stroke-width="0.6"/>
<path d="M502.5 249.5 C502.5 247.5 513.5 247.5 513.5 249.5 V256 l-2.5 2.5 V262 h-6 V258.5 l-2.5 -2.5z" fill="#fff" stroke="#333" stroke-width="0.9"/>
<path d="M503 250 C506 252 510 252 513 250" stroke="#222" stroke-width="1.8"/>
<path d="M503 256h10" stroke="#444" stroke-width="0.7"/>
<path d="M506 262 C506 270 508 276 508 287 M510.5 262 C510.5 270 508.5 276 508.5 287" stroke="#333" stroke-width="0.8"/>
<path d="M508 287 C507 296 500 304 488 310" stroke="#333" stroke-width="0.9"/>
<path d="M508.5 287 C509 300 506 312 499 318 C494 322 489 325 484 329" stroke="#333" stroke-width="0.9"/>
<path d="M486 309 l4 -2 2 2.5 -4 2.5z" fill="#fff" stroke="#333" stroke-width="0.8"/>
<path d="M470 311 C470 307 483 307 483.5 311 L484 330 C484 334 470 334 469 330Z" fill="#fff" stroke="#222" stroke-width="1"/>
<path d="M470.5 316h13 M470 320.5h13.5 M469.5 325h14 M474 309v23 M479 309v23" stroke="#333" stroke-width="0.8"/>
<path d="M470 311 C471 313.5 482 313.5 483.5 311" stroke="#333" stroke-width="0.8"/>
<path d="M469 330 C471 333.5 482 333.5 484 330" stroke="#111" stroke-width="1.6"/>
<!-- box 2 contents -->
<path d="M500 349 l10 0 1 2 v13 l-2 4 h-9 l-1 -4 v-13z" fill="#fff" stroke="#444"/>
<path d="M501 359h9 M501 361h9" stroke="#555" stroke-width="0.6"/>
<path d="M503 368h5v4h-5z" fill="#fff" stroke="#444"/>
<!-- fuses / holders -->
<path d="M502 380.5h2v2h-2z M502 384h2v2h-2z" fill="#555" stroke="#444" stroke-width="0.5"/>
<path d="M507 377h6v10h-6z" fill="#fff" stroke="#333"/>
<path d="M507.5 386v3 M511.5 386v3" stroke="#333"/>
<path d="M505 389v4" stroke="#666" stroke-width="0.7"/>
<path d="M502 397h2v2h-2z M502 401h2v2h-2z" fill="#555" stroke="#444" stroke-width="0.5"/>
<path d="M507 393h6v10h-6z" fill="#fff" stroke="#333"/>
<path d="M507.5 402v3.5 M511.5 402v3.5" stroke="#333"/>
<path d="M505 406v26" stroke="#555" stroke-width="0.7"/>
<!-- harness (double line tubes) -->
<defs><g id="harnW">
<path d="M490 436 C490 425 495 419.5 504 419.5 C521 419.5 541 423 561 436 C581 447 600 453 612 461"/>
<path d="M491 432 C488 445 487 460 489 475 C490 485 490 492 493 498"/>
<path d="M493 466 C510 470 528 473 540 477 C552 482 560 495 570 504"/>
</g>
<g id="harnN">
<path d="M505 454 C505 462 498 467 493 467"/>
<path d="M540 477 C545 470 552 477 555 486"/>
<path d="M570 504 C572 512 565 520 556 527"/>
<path d="M553 493 C545 500 540 510 546 516 C555 518 565 510 570 505"/>
<path d="M488 490 C482 495 483 502 492 501"/>
<path d="M571 505 C574 495 580 488 597 477"/>
</g></defs>
<use href="#harnW" stroke="#333" stroke-width="8.6"/>
<use href="#harnW" stroke="#fff" stroke-width="6.8"/>
<use href="#harnN" stroke="#3a3a3a" stroke-width="2.6"/>
<use href="#harnN" stroke="#fff" stroke-width="1.1"/>
<path d="M515 417 C530 417 545 421 560 430 L558 433 C545 425 530 421 515 421z" fill="#fff" stroke="#333" stroke-width="0.9"/>
<path d="M497 424 C520 423 548 430 575 444 C592 452 605 458 612 463" stroke="#333" stroke-width="0.8"/>
<path d="M600 481 C610 488 625 495 640 493 C647 490 648 486 646 481" stroke="#333" stroke-width="0.9"/>
<path d="M556 426 l3 -1.5 4 3 -1 6 -3.5 -1z" fill="#fff" stroke="#222" stroke-width="1"/>
<path d="M560 429 l1.5 1 -0.5 3 -1.5 -1z" fill="#111" stroke="none"/>
<path d="M570.5 422.5 l4 -1.5 2.5 3 -1 4.5 -3.5 1 -2 -3z" fill="#fff" stroke="#222" stroke-width="0.9"/>
<path d="M571 423 l3.5 -1.2" stroke="#111" stroke-width="1.3"/>
<path d="M571.5 428.5 l-3.5 3" stroke="#333" stroke-width="0.7"/>
<!-- fuse box in harness -->
<path d="M501 432.8h9v21.6h-9z" fill="#fff" stroke="#333"/>
<path d="M501 436h9 M501 439h9 M501 442h9 M501 445h9 M501 448h9 M504 433v15 M507 433v15" stroke="#333" stroke-width="0.7"/>
<path d="M510 437h2.5v11h-2.5z" fill="#fff" stroke="#444" stroke-width="0.7"/>
<!-- left connectors -->
<path d="M477 428 l6 -2 5 3 1 8 -3 5 -3 -1 -6 0z" fill="#fff" stroke="#222" stroke-width="1"/>
<path d="M478 431h4v6h-4z" fill="#222" stroke="#222"/>
<path d="M484 428 l4 -3 v4z M483 439 l3 6 -2 3z" fill="#222" stroke="#222" stroke-width="0.8"/>
<path d="M486 422 C488 419 492 418 494 420" stroke="#333"/>
<!-- small connector on harness -->
<path d="M524.6 429.7h5.8v5.8h-5.8z" fill="#fff" stroke="#444" stroke-width="0.8"/>
<path d="M527.5 435.5v36" stroke="#444" stroke-width="0.8"/>
<!-- black regulator plug -->
<path d="M495 478 l18 -3 7 4 1 17 -4 5 -14 3 -7 -3z" fill="#fff" stroke="#222" stroke-width="1"/>
<path d="M497 480h8v14h-8z M507 478h9v8h-9z M506 489h12v7h-12z" fill="#222" stroke="#222" stroke-width="0.6"/>
<path d="M499 483h3 M499 487h3 M509 480h4 M509 491h6" stroke="#eee" stroke-width="1"/>
<path d="M498 500h14v4h-14z" fill="#fff" stroke="#333"/>
<!-- connector mid right 556,490 -->
<path d="M552 484h8v9h-8z" fill="#fff" stroke="#333"/>
<path d="M552 487h8" stroke="#222" stroke-width="2"/>
<!-- black bottom connector -->
<path d="M547 538 C544 534 548 525 554 523 C560 522 561 527 558 533 C556 537 551 541 547 538z" fill="#222" stroke="#222"/>
<path d="M549 532 l7 -6 M550 535 l6 -5" stroke="#bbb" stroke-width="0.7"/>
<!-- relay box right -->
<path d="M610.5 442.3h22.3v27.4h-22.3z" fill="#fff" stroke="#333"/>
<path d="M611 443h5v26" stroke="#333" stroke-width="1"/>
<path d="M604 452h7v13h-7z" fill="#333" stroke="#222"/>
<path d="M606 454h3v6h-3z" fill="#fff" stroke="none"/>
<path d="M613 440h6v3h-6z" fill="#fff" stroke="#444"/>
<!-- circle A lower -->
<circle cx="582.4" cy="463.2" r="4.5" fill="#fff" stroke="#555" stroke-width="0.8"/>
<text x="580.4" y="465.7" font-family="Liberation Sans, sans-serif" font-size="5.5px" fill="#555" stroke="none">A</text>
<path d="M586 466 L596 473" stroke="#555" stroke-width="0.7"/>
<path d="M595.5 472.5h7v6h-7z" fill="#fff" stroke="#444"/>
<path d="M603 474l4 1 v4 l-3 1z" fill="#333" stroke="#333"/>
<!-- right connector 646 -->
<path d="M643 465 l5 -2 5 2 v6 l-3 3 v6 h-4 v-6 l-3 -3z" fill="#fff" stroke="#333"/>
<path d="M643 466h4v4h-4z" fill="#222" stroke="#222"/>
<path d="M646 475h4" stroke="#222" stroke-width="1.4"/>
</g>

<g fill="#606060" font-family="Liberation Sans, sans-serif" font-size="7.3px">
<text x="489.4" y="154.7">92172A</text>
<text x="487.9" y="173.6">11057A</text>
<text x="500" y="187.3">92154</text>
<text x="478.4" y="196.7">26031A</text>
<text x="463.6" y="246">26006B</text>
<text x="525.3" y="236.8">11057</text>
<text x="528.8" y="247.6">26031B</text>
<text x="637.9" y="157">92153</text>
<text x="648.7" y="172">26011</text>
<text x="546" y="188.7">92172</text>
<text x="550.4" y="209">21066</text>
<text x="588.9" y="230">130</text>
<text x="553.8" y="321.4">21171</text>
<text x="595.8" y="319.8">130A</text>
<text x="618.4" y="286.6">92072</text>
<text x="648.7" y="295.5">92173</text>
<text x="529.6" y="365.6">21130</text>
<text x="567.2" y="367.5">92070</text>
<text x="627" y="342.2">92173</text>
<text x="600.4" y="366.2">92173</text>
<text x="580.2" y="374.4">92171</text>
<text x="620.6" y="379.3">92173</text>
<text x="461.5" y="386.5">26006A</text>
<text x="530" y="386.5">27034</text>
<text x="465.8" y="403.7">26006</text>
<text x="530" y="403.7">27034</text>
<text x="488.7" y="544">26031</text>
<text x="717" y="156.6">E0160-89328</text>
<text x="698.8" y="163.4">92154A</text>
<text x="702.6" y="186">92200</text>
<text x="701" y="203.4">510</text>
<text x="744" y="236.7">21193</text>
<text x="708.6" y="308.4" textLength="50" lengthAdjust="spacingAndGlyphs">REF. THROTTLE</text>
<text x="726" y="316.9" textLength="40" lengthAdjust="spacingAndGlyphs">-EQUIPMENT</text>
<text x="689.7" y="320.2">130</text>
<text x="662.5" y="335">130</text>
<text x="655.8" y="363.3">21171</text>
<text x="644.4" y="392.2">92072</text>
<text x="652.8" y="407">92070</text>
<text x="639.3" y="419.3">92009</text>
<text x="639.3" y="435.7">13272</text>
<text x="730.7" y="436.2">21130</text>
<text x="733.2" y="446">92172B</text>
<text x="742.5" y="476.4">59031</text>
<text x="735.8" y="490.5">27010</text>
<text x="680.7" y="513.1">92072A</text>
<text x="649.9" y="533.5">92072A</text>
<text x="697.5" y="534">26011A</text>
</g>
<text x="580.7" y="552.5" font-family="Liberation Sans, sans-serif" font-size="5.2px" fill="#222" textLength="64" lengthAdjust="spacingAndGlyphs">Rendered by LeadVenture, Inc.</text>
</svg><!--/DIAGRAM--><div class="a" id="thead"></div>
<div class="a" style="left:3px;top:629px;width:854px;height:2px;background:#2f3032"></div><div class="a" style="left:3px;top:631px;width:854px;height:2px;background:#4a4b4e"></div>
<div class="a row" style="top:664px;height:3px;background:#fff"></div>
<div class="a row" style="top:667px;height:18px;background:#6a9bd6;box-shadow:inset 0 1px 0 #5f8cc4, inset 0 -1px 0 #5f8cc4"></div>
<div class="a row" style="top:685px;height:18px;background:#fff"></div>
<div class="a row" style="top:703px;height:18px;background:#e7e4e0"></div>
<div class="a row" style="top:721px;height:7px;background:#fff"></div>


<svg class="a" style="left:0;top:0" width="857" height="728" viewBox="0 0 857 728">
<defs>
<g id="srt"><path d="M-3.7 5 L0 0.3 L3.7 5 Z M-3.7 5.9 L0 9.9 L3.7 5.9 Z" fill="#fff"/></g>
<g id="pad">
<path d="M0.8 1.5 h13.4 v12.6 q0 1.4 -1.4 1.4 h-10.6 q-1.4 0 -1.4 -1.4 z" fill="#fff" stroke="#111" stroke-width="1.2"/>
<path d="M1.5 1.2 h12" stroke="#111" stroke-width="1.8" stroke-dasharray="1 1"/>
<path d="M3 5.5 h4.5 M3 8.3 h4.5 M3 11 h4" stroke="#222" stroke-width="1" stroke-dasharray="1.2 0.6"/>
<path d="M3.5 9.5 L6 12.8 L12.5 4.8" fill="none" stroke="#1b1a9a" stroke-width="2"/>
</g>
<g id="cbx"><rect x="0" y="0" width="12.5" height="12" rx="1" fill="#1a73e8"/><path d="M2.6 6.2 L5 8.8 L10 3" fill="none" stroke="#fff" stroke-width="1.9"/></g>
<g id="redo"><path d="M0 14 C0 7 4 4 9 4.5 L9 1.5 L15 6 L9 10.5 L9 7.5 C5 7 2.5 9 2 14 Z" fill="#111"/></g>
</defs>
<use href="#srt" x="203.5" y="643"/>
<use href="#srt" x="340" y="643"/>
<use href="#srt" x="620.5" y="643"/>
<use href="#srt" x="751" y="643"/>
<use href="#srt" x="89.5" y="643"/>
<use href="#cbx" x="448" y="640"/>
<use href="#cbx" x="674" y="640"/>
<use href="#cbx" x="836" y="640"/>
<clipPath id="r0"><rect x="0" y="664" width="857" height="3"/></clipPath><g clip-path="url(#r0)"><use href="#pad" x="77.5" y="650"/></g>
<use href="#pad" x="77.5" y="668"/>
<use href="#pad" x="77.5" y="686"/>
<use href="#pad" x="77.5" y="704"/>
<use href="#pad" x="77.5" y="722"/>
<use href="#redo" x="41" y="704.5"/>
<use href="#redo" x="41" y="722.5"/>
</svg>
<div class="a row" style="top:629px;height:34px;background:transparent"></div>
<div class="a th" style="left:136px">Ref #</div>
<div class="a th" style="left:260px">Part #</div>
<div class="a th" style="left:463px">Description</div>
<div class="a th" style="left:688px">Qty</div>
<div class="a th" style="left:849px">C</div>

<div class="a td" style="left:57px;width:200px;top:670px;text-align:center;color:#0d1a33">21171</div>
<div class="a td" style="left:182.5px;width:200px;top:670px;text-align:center;color:#0d1a33">21171-0725</div>
<div class="a td" style="left:391.5px;width:200px;top:670px;text-align:center;color:#0d1a33">COIL-ASSY-IGNITION</div>
<div class="a td" style="left:596px;width:200px;top:670px;text-align:center;color:#0d1a33">2</div>
<div class="a td" style="left:57px;width:200px;top:688px;text-align:center;color:#111">21193</div>
<div class="a td" style="left:182.5px;width:200px;top:688px;text-align:center;color:#111">21193-0037</div>
<div class="a td" style="left:391.5px;width:200px;top:688px;text-align:center;color:#111">FLYWHEEL-ASSY</div>
<div class="a td" style="left:596px;width:200px;top:688px;text-align:center;color:#111">1</div>
<div class="a td" style="left:57px;width:200px;top:706px;text-align:center;color:#111">26006</div>
<div class="a td" style="left:182.5px;width:200px;top:706px;text-align:center;color:#111">26006-0034</div>
<div class="a td" style="left:391.5px;width:200px;top:706px;text-align:center;color:#111">FUSE,10A</div>
<div class="a td" style="left:596px;width:200px;top:706px;text-align:center;color:#111">1</div>
<div class="a td" style="left:57px;width:200px;top:724px;text-align:center;color:#111">26006A</div>
<div class="a td" style="left:182.5px;width:200px;top:724px;text-align:center;color:#111">26006-0035</div>
<div class="a td" style="left:391.5px;width:200px;top:724px;text-align:center;color:#111">FUSE,3A</div>
<div class="a td" style="left:596px;width:200px;top:724px;text-align:center;color:#111">1</div>
<div class="a" id="lborder"></div>
</body></html>
